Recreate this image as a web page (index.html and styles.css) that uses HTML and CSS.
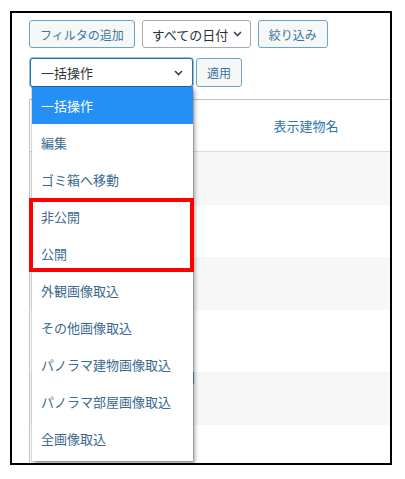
FILE: index.html
```html
<!DOCTYPE html>
<html lang="ja">
<head>
<meta charset="utf-8">
<title>一括操作</title>
<link rel="stylesheet" href="styles.css">
</head>
<body>
<div class="frame">
  <div class="toolbar">
    <div class="row">
      <span class="btn">フィルタの追加</span>
      <span class="select date"><span>すべての日付</span><svg class="chev" width="9" height="6" viewBox="0 0 9 6"><polyline points="1,1 4.5,4.5 8,1" fill="none" stroke="#3c434a" stroke-width="1.6"/></svg></span>
      <span class="btn">絞り込み</span>
    </div>
    <div class="row row2">
      <span class="select bulk"><span>一括操作</span><svg class="chev" width="9" height="6" viewBox="0 0 9 6"><polyline points="1,1 4.5,4.5 8,1" fill="none" stroke="#3c434a" stroke-width="1.6"/></svg></span>
      <span class="btn">適用</span>
    </div>
  </div>
  <div class="table">
    <div class="thead"><div class="col1"></div><div class="col2">表示建物名</div></div>
    <div class="tr alt"></div>
    <div class="tr"></div>
    <div class="tr alt"></div>
    <div class="tr"></div>
    <div class="tr alt"><span class="peek"></span></div>
    <div class="tr"></div>
  </div>
  <ul class="dropdown">
    <li class="selected">一括操作</li>
    <li>編集</li>
    <li>ゴミ箱へ移動</li>
    <li>非公開</li>
    <li>公開</li>
    <li>外観画像取込</li>
    <li>その他画像取込</li>
    <li>パノラマ建物画像取込</li>
    <li>パノラマ部屋画像取込</li>
    <li>全画像取込</li>
  </ul>
  <div class="highlight-box"></div>
</div>
</body>
</html>
```

FILE: styles.css
```css
html, body {
  margin: 0;
  padding: 0;
  background: #fff;
}
body {
  font-family: "Noto Sans CJK JP", "Noto Sans", sans-serif;
  font-size: 13px;
  color: #2c3338;
}
.frame {
  position: relative;
  box-sizing: border-box;
  width: 382px;
  height: 454px;
  margin: 11px 0 0 10px;
  border: 2px solid #000;
  overflow: hidden;
  background: #fff;
}
.toolbar {
  padding: 7px 0 0 17px;
}
.row {
  display: flex;
  gap: 7px;
  height: 28px;
}
.row2 {
  margin-top: 10px;
  padding-left: 1px;
  gap: 3px;
  height: 29px;
}
.btn {
  box-sizing: border-box;
  display: flex;
  align-items: center;
  height: 100%;
  padding: 0 10px;
  border: 1px solid #6aa3cc;
  border-radius: 3px;
  background: #f6f7f7;
  color: #3a74a2;
  font-size: 12px;
  white-space: nowrap;
}
.select {
  box-sizing: border-box;
  display: flex;
  align-items: center;
  justify-content: space-between;
  height: 100%;
  border: 1px solid #a7aaad;
  border-radius: 3px;
  background: #fff;
  color: #2c3338;
  white-space: nowrap;
}
.date {
  width: 109px;
  padding: 0 8px 0 9px;
}
.bulk {
  width: 163px;
  padding: 0 9px 0 10px;
  border-color: #2271b1;
  box-shadow: 0 0 0 1px rgba(34, 113, 177, 0.45);
}
.chev {
  display: block;
  flex: none;
}
.table {
  box-sizing: border-box;
  width: 361px;
  margin: 12px 0 0 17px;
  border-left: 1px solid #c3c4c7;
  border-top: 1px solid #c3c4c7;
}
.thead {
  display: grid;
  grid-template-columns: 192px 1fr;
  align-items: center;
  height: 51px;
  border-bottom: 1px solid #dcdcde;
}
.col2 {
  text-align: center;
  color: #2f74ad;
}
.tr {
  height: 52.5px;
}
.tr.alt {
  background: #f7f7f7;
}
.peek {
  display: block;
  width: 2px;
  height: 12px;
  margin: 10px 0 0 162px;
  background: #6fa4cf;
}
.dropdown {
  position: absolute;
  left: 20px;
  top: 74px;
  box-sizing: border-box;
  width: 161px;
  margin: 0;
  padding: 0 0 4px;
  list-style: none;
  background: #fff;
  box-shadow: 0 0 0 1px rgba(0, 0, 0, 0.12), 2px 3px 4px rgba(0, 0, 0, 0.35);
}
.dropdown li {
  height: 37px;
  line-height: 37px;
  padding-left: 9px;
  color: #3b6a8f;
  white-space: nowrap;
}
.dropdown li.selected {
  background: #2490f5;
  color: #fff;
}
.highlight-box {
  position: absolute;
  left: 17px;
  top: 185px;
  box-sizing: border-box;
  width: 165px;
  height: 74px;
  border: 4px solid #ff0000;
}
```
